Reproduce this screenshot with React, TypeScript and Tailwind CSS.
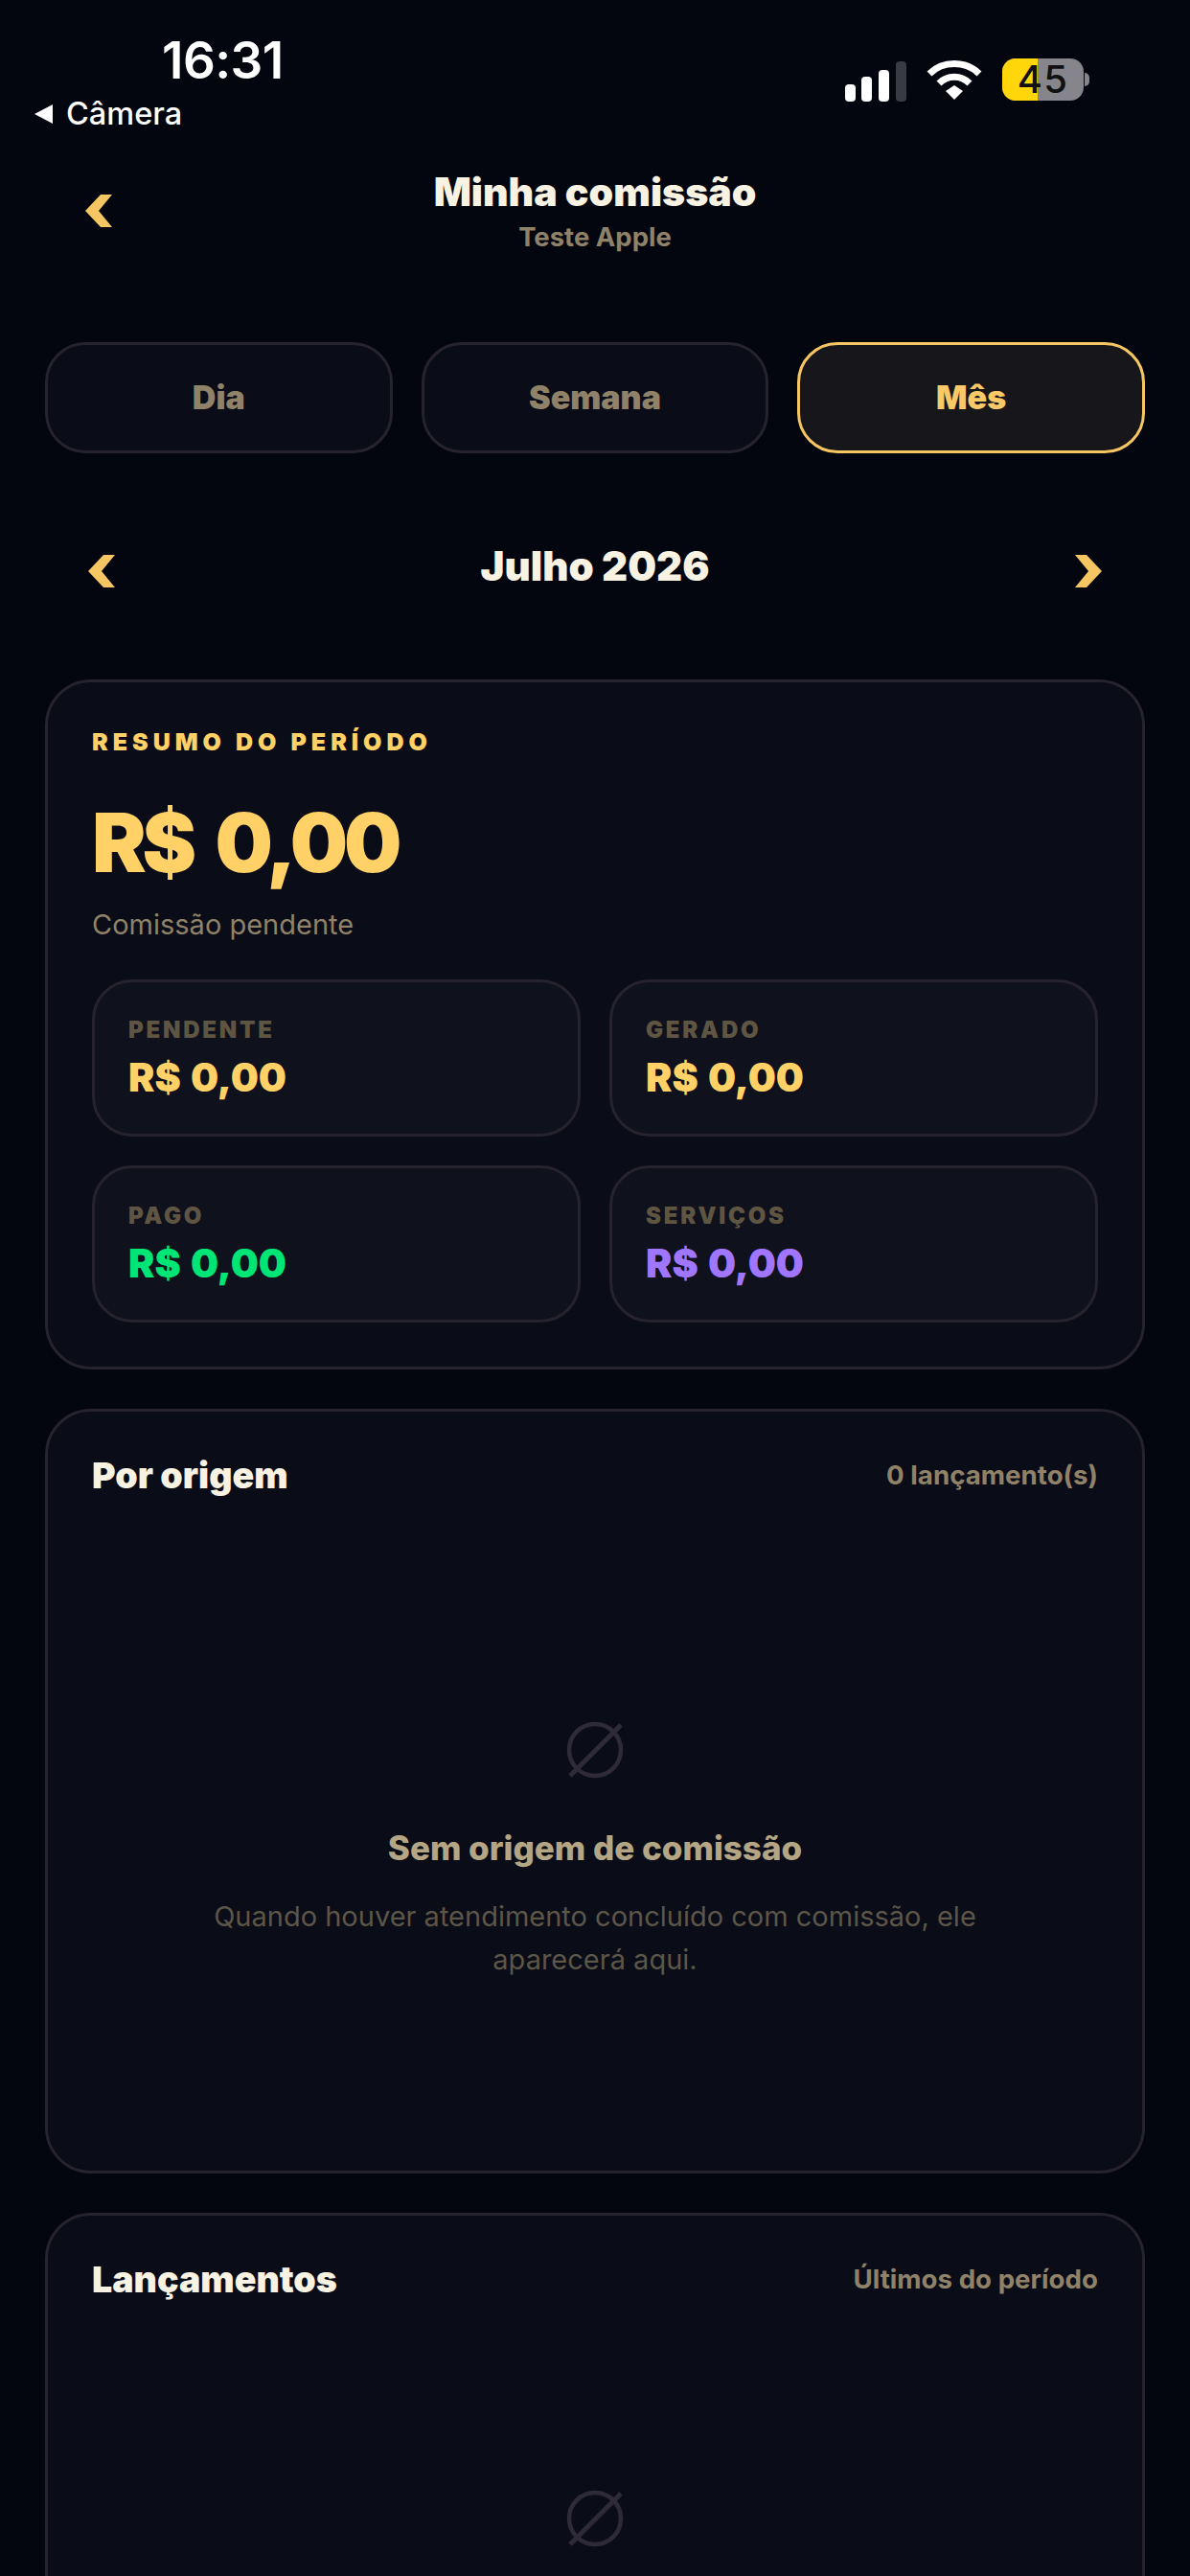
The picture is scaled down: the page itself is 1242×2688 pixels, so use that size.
import React from 'react';

const FONT = 'font-["Inter","Noto_Sans",sans-serif]';

const Chevron = ({ right = false }: { right?: boolean }) => (
  <svg width="28" height="34" viewBox="0 0 28 34" className={right ? 'rotate-180' : ''}>
    <polygon points="16,0 28,0 14,17 28,34 16,34 0,17" fill="#f6c662" />
  </svg>
);

const EmptyIcon = () => (
  <svg width="66" height="66" viewBox="0 0 66 66">
    <circle cx="33" cy="33" r="27" fill="none" stroke="#2f2a37" strokeWidth="4.5" />
    <line x1="7" y1="60" x2="60" y2="7" stroke="#2f2a37" strokeWidth="5" />
  </svg>
);

const StatusBar = () => (
  <div className="h-[150px] flex justify-between">
    <div className="pl-[35px] pt-[36px] flex flex-col">
      <span className="pl-[134px] text-[53px] leading-[54px] font-semibold text-white tracking-[-0.01em]">16:31</span>
      <div className="flex items-center gap-[14px] mt-[9px]">
        <svg width="20" height="20" viewBox="0 0 20 20">
          <polygon points="20,0 20,20 1,10" fill="#fff" />
        </svg>
        <span className="text-[32.5px] leading-[40px] font-medium text-white">Câmera</span>
      </div>
    </div>
    <div className="pt-[61px] pr-[105px] flex items-start gap-[21px]">
      <svg width="64" height="42" viewBox="0 0 64 42" className="mt-[3px]">
        <rect x="0" y="24" width="11" height="18" rx="4" fill="#fff" />
        <rect x="17" y="16" width="11" height="26" rx="4" fill="#fff" />
        <rect x="35" y="9" width="11" height="33" rx="4" fill="#fff" />
        <rect x="53" y="0" width="11" height="42" rx="4" fill="#3a3a42" />
      </svg>
      <svg width="58" height="42" viewBox="0 0 58 42" className="mt-[2px]">
        <path d="M3 14 C17 0 41 0 55 14" fill="none" stroke="#fff" strokeWidth="7" />
        <path d="M13 24 C22 15 36 15 45 24" fill="none" stroke="#fff" strokeWidth="7" />
        <polygon points="20,32 29,26 38,32 29,41" fill="#fff" />
      </svg>
      <div className="flex items-center">
        <div className="relative w-[85px] h-[44px] rounded-[14px] flex bg-[#85858b]">
          <div className="w-[37px] rounded-l-[14px] bg-[#ffd60a]" />
          <span className="absolute inset-0 flex items-center justify-center text-[40px] leading-none font-medium text-[#111] tracking-[0.03em]">45</span>
        </div>
        <div className="w-[5px] h-[14px] ml-[1px] rounded-r-full bg-[#85858b]" />
      </div>
    </div>
  </div>
);

const Tab = ({ label, active = false }: { label: string; active?: boolean }) => (
  <div
    className={`h-[116px] rounded-[42px] border-[3px] flex items-center justify-center text-[34px] leading-[40px] font-black ${
      active ? 'border-[#f6c662] bg-[#17161a] text-[#f8c966]' : 'border-[#26222e] bg-[#0a0c17] text-[#8f8268]'
    }`}
  >
    {label}
  </div>
);

const Stat = ({ label, color }: { label: string; color: string }) => (
  <div className="h-[164px] rounded-[42px] border-[3px] border-[#26222e] bg-[#0f111c] pl-[35px] pt-[36px]">
    <div className="text-[24px] leading-[28px] font-black tracking-[0.115em] text-[#5f5543]">{label}</div>
    <div className={`mt-[10px] text-[41px] leading-[50px] font-black [word-spacing:0.05em] ${color}`}>R$ 0,00</div>
  </div>
);

const Empty = ({ title, text }: { title: string; text: string }) => (
  <div className="flex flex-col items-center mt-[232px] text-center">
    <EmptyIcon />
    <div className="mt-[47px] text-[35px] leading-[44px] font-extrabold text-[#b4a685]">{title}</div>
    <div className="mt-[27px] w-[860px] text-[29px] leading-[45px] text-[#5c5649]">{text}</div>
  </div>
);

const SectionHead = ({ title, side }: { title: string; side: string }) => (
  <div className="flex justify-between items-center">
    <span className="text-[37.5px] leading-[42px] font-black text-[#f8f2e2]">{title}</span>
    <span className="text-[27.7px] font-bold text-[#8f8268]">{side}</span>
  </div>
);

export default function App() {
  return (
    <div className={`h-[2688px] overflow-hidden bg-[#03050f] ${FONT}`}>
      <StatusBar />

      <div className="h-[207px] pl-[89px] pr-[47px] relative">
        <div className="pt-[53px]"><Chevron /></div>
        <div className="absolute left-0 right-0 top-[25px] text-center">
          <div className="text-[41px] leading-[50px] font-black text-[#f8f2e2]">Minha comissão</div>
          <div className="mt-[5px] text-[27.5px] leading-[34px] font-bold text-[#8f8268]">Teste Apple</div>
        </div>
      </div>

      <div className="grid grid-cols-3 gap-[30px] px-[47px]">
        <Tab label="Dia" />
        <Tab label="Semana" />
        <Tab label="Mês" active />
      </div>

      <div className="h-[236px] px-[92px] flex items-center justify-between pb-[1px]">
        <div className="mt-[11px]"><Chevron /></div>
        <span className="text-[42px] font-black text-[#f8f2e2]">Julho 2026</span>
        <div className="mt-[11px]"><Chevron right /></div>
      </div>

      <div className="mx-[47px] flex flex-col gap-[41px]">
        <div className="h-[720px] rounded-[48px] border-[3px] border-[#26222e] bg-[#0a0c17] px-[46px] pt-[46px]">
          <div className="text-[25px] leading-[32px] font-black tracking-[0.2em] text-[#ffd166]">RESUMO DO PERÍODO</div>
          <div className="mt-[40px] text-[85px] leading-[100px] font-black tracking-[-0.05em] [word-spacing:0.13em] text-[#ffd166]">R$ 0,00</div>
          <div className="mt-[17px] text-[29px] leading-[36px] text-[#8f8268]">Comissão pendente</div>
          <div className="mt-[39px] grid grid-cols-2 gap-[30px]">
            <Stat label="PENDENTE" color="text-[#ffd166]" />
            <Stat label="GERADO" color="text-[#ffd166]" />
            <Stat label="PAGO" color="text-[#00e676]" />
            <Stat label="SERVIÇOS" color="text-[#a176ff]" />
          </div>
        </div>

        <div className="h-[798px] rounded-[48px] border-[3px] border-[#26222e] bg-[#0a0c17] px-[46px] pt-[46px]">
          <SectionHead title="Por origem" side="0 lançamento(s)" />
          <Empty title="Sem origem de comissão" text="Quando houver atendimento concluído com comissão, ele aparecerá aqui." />
        </div>

        <div className="h-[500px] rounded-t-[48px] border-[3px] border-[#26222e] bg-[#0a0c17] px-[46px] pt-[46px]">
          <SectionHead title="Lançamentos" side="Últimos do período" />
          <div className="flex justify-center mt-[195px]"><EmptyIcon /></div>
        </div>
      </div>
    </div>
  );
}
